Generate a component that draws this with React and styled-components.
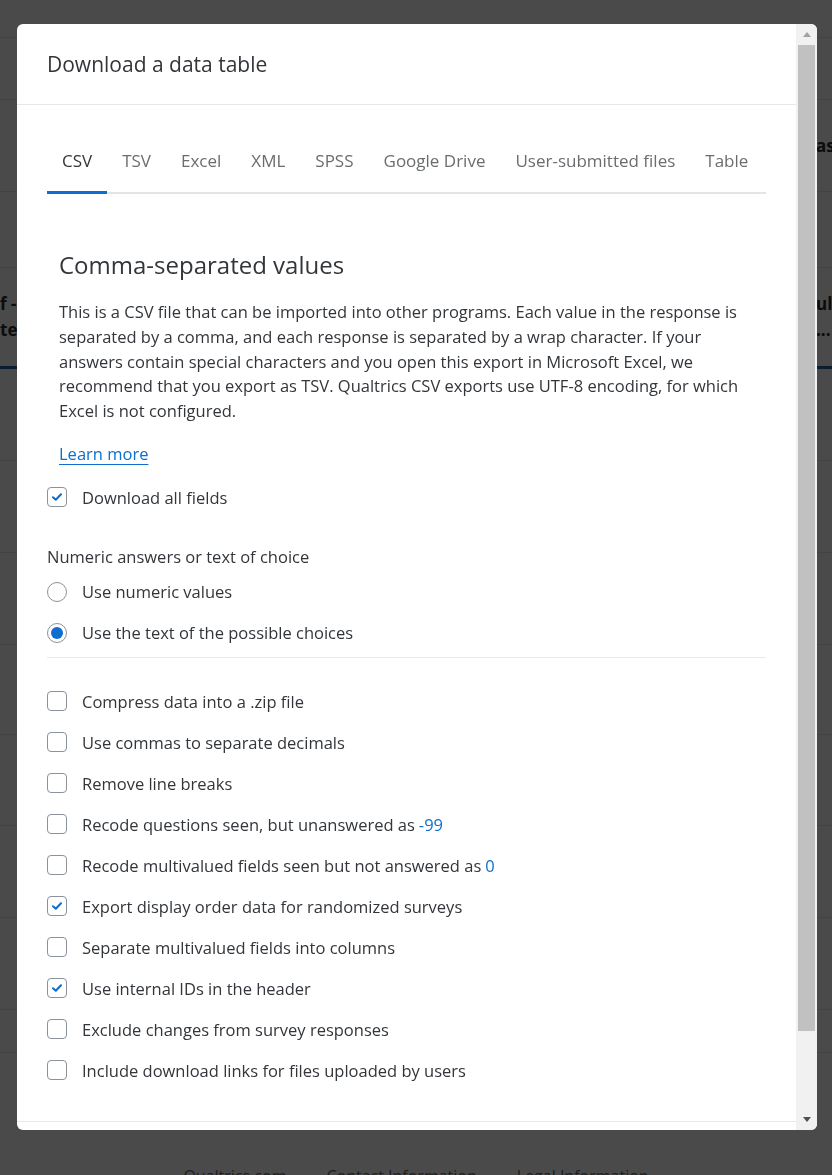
import React from 'react'
import styled, {createGlobalStyle} from 'styled-components'

const GlobalStyle = createGlobalStyle`
  * { box-sizing: border-box; }
  html, body { margin: 0; padding: 0; }
  body {
    font-family: 'Open Sans', 'Noto Sans', Arial, sans-serif;
    color: #32363a;
    background: #fff;
    overflow: hidden;
  }
`

const BLUE = '#0b6ed0'

/* page behind the dialog */
const BgPage = styled.div`
  height: 100vh;
  display: flex;
  flex-direction: column;
  background: #fff;
`
const BgRow = styled.div`
  height: ${({$h}) => $h}px;
  flex-shrink: 0;
  display: flex;
  justify-content: space-between;
  align-items: center;
  border-bottom: ${({$accent}) => ($accent ? '3px solid #2160a6' : '1px solid #e8e8e8')};
  color: #2a2a2a;
  font-size: 17px;
  font-weight: 700;
`
const BgCell = styled.div`
  display: flex;
  flex-direction: column;
  line-height: 26px;
  padding-left: ${({$right}) => ($right ? '0' : '0')};
  width: ${({$right}) => ($right ? '16px' : 'auto')};
  overflow: hidden;
  white-space: nowrap;
`
const BgFooter = styled.div`
  flex: 1;
  display: flex;
  justify-content: center;
  gap: 40px;
  padding-top: 112px;
  color: #6b6b6b;
  font-size: 16px;
`

/* dialog */
const Overlay = styled.div`
  position: fixed;
  inset: 0;
  background: rgba(0, 0, 0, 0.71);
  display: flex;
  padding: 24px 15px 45px 17px;
`
const Modal = styled.div`
  flex: 1;
  display: flex;
  background: #fff;
  border-radius: 6px;
  overflow: hidden;
`
const ModalContent = styled.div`
  flex: 1;
  min-width: 0;
  overflow: hidden;
`
const ScrollBar = styled.div`
  width: 21px;
  flex-shrink: 0;
  display: flex;
  flex-direction: column;
  background: #f1f1f1;
`
const ScrollArrow = styled.div`
  height: 21px;
  flex-shrink: 0;
  display: flex;
  align-items: center;
  justify-content: center;
  &::before {
    content: '';
    width: 0;
    height: 0;
    border-left: 4.5px solid transparent;
    border-right: 4.5px solid transparent;
    ${({$down}) =>
      $down ? 'border-top: 5px solid #505050;' : 'border-bottom: 5px solid #a3a3a3;'}
  }
`
const ScrollTrack = styled.div`
  flex: 1;
  padding: 0 2px;
`
const ScrollThumb = styled.div`
  height: 92.7%;
  background: #c1c1c1;
`

const Header = styled.div`
  height: 81px;
  padding: 0 30px;
  display: flex;
  align-items: center;
  border-bottom: 1px solid #e8e8e8;
`
const Title = styled.h2`
  margin: 0;
  font-size: 21px;
  font-weight: 400;
  color: #32363a;
`
const Body = styled.div`
  padding: 0 30px 30px;
`
const TabList = styled.div`
  margin-top: 24px;
  display: flex;
  border-bottom: 2px solid #e4e4e4;
`
const Tab = styled.div`
  padding: 20px 15px 18px;
  margin-bottom: -2px;
  font-size: 17px;
  line-height: 24px;
  white-space: nowrap;
  color: ${({$active}) => ($active ? '#32363a' : '#6a6d70')};
  border-bottom: 3px solid ${({$active}) => ($active ? BLUE : 'transparent')};
`
const Intro = styled.div`
  margin-top: 55px;
  padding: 0 12px;
`
const SectionTitle = styled.h3`
  margin: 0;
  font-size: 24px;
  line-height: 32px;
  font-weight: 400;
  color: #32363a;
`
const Paragraph = styled.p`
  margin: 19px 0 0;
  font-size: 16.5px;
  line-height: 24.75px;
`
const LinkLine = styled.div`
  margin-top: 18px;
  font-size: 16.5px;
  line-height: 24.75px;
`
const LearnMore = styled.a`
  color: ${BLUE};
  text-decoration: underline;
  text-underline-offset: 4px;
  text-decoration-thickness: 1px;
`
const OptionRow = styled.label`
  height: 41px;
  display: flex;
  align-items: center;
  gap: 15px;
  font-size: 16.5px;
  margin-top: ${({$mt}) => $mt || 0}px;
`
const Box = styled.span`
  width: 20px;
  height: 20px;
  flex-shrink: 0;
  display: flex;
  align-items: center;
  justify-content: center;
  border: 1px solid #8b9299;
  border-radius: ${({$round}) => ($round ? '50%' : '4px')};
  background: #fff;
`
const Dot = styled.span`
  width: 12px;
  height: 12px;
  border-radius: 50%;
  background: ${BLUE};
`
const Value = styled.span`
  color: ${BLUE};
  margin-left: 4px;
`
const GroupLabel = styled.div`
  margin-top: 27px;
  font-size: 16.5px;
  line-height: 24.75px;
`
const Divider = styled.hr`
  margin: 3.5px 0 0;
  border: 0;
  border-top: 1px solid #e8e8e8;
`
const OptionList = styled.div`
  margin-top: 23px;
`
const Footer = styled.div`
  height: 96px;
  padding: 0 30px;
  display: flex;
  align-items: center;
  justify-content: flex-end;
  gap: 12px;
  border-top: 1px solid #e8e8e8;
`
const Button = styled.button`
  font: inherit;
  font-size: 16px;
  padding: 8px 18px;
  border-radius: 4px;
  border: 1px solid ${BLUE};
  background: ${({$primary}) => ($primary ? BLUE : '#fff')};
  color: ${({$primary}) => ($primary ? '#fff' : BLUE)};
`

const Check = () => (
  <svg width="10" height="8" viewBox="0 0 10 8">
    <path d="M1 4.2 L3.8 6.8 L9 1.2" fill="none" stroke={BLUE} strokeWidth="2" strokeLinecap="round" strokeLinejoin="round" />
  </svg>
)

const tabs = ['CSV', 'TSV', 'Excel', 'XML', 'SPSS', 'Google Drive', 'User-submitted files', 'Table']

const options = [
  {label: 'Compress data into a .zip file'},
  {label: 'Use commas to separate decimals'},
  {label: 'Remove line breaks'},
  {label: 'Recode questions seen, but unanswered as', value: '-99'},
  {label: 'Recode multivalued fields seen but not answered as', value: '0'},
  {label: 'Export display order data for randomized surveys', checked: true},
  {label: 'Separate multivalued fields into columns'},
  {label: 'Use internal IDs in the header', checked: true},
  {label: 'Exclude changes from survey responses'},
  {label: 'Include download links for files uploaded by users'},
]

function Checkbox({label, value, checked, mt}) {
  return (
    <OptionRow $mt={mt}>
      <Box>{checked && <Check />}</Box>
      <span>
        {label}
        {value && <Value>{value}</Value>}
      </span>
    </OptionRow>
  )
}

function Radio({label, checked, mt}) {
  return (
    <OptionRow $mt={mt}>
      <Box $round>{checked && <Dot />}</Box>
      <span>{label}</span>
    </OptionRow>
  )
}

function Background() {
  return (
    <BgPage>
      <BgRow $h={38} />
      <BgRow $h={62} />
      <BgRow $h={92}>
        <span />
        <BgCell $right>
          <span>as</span>
        </BgCell>
      </BgRow>
      <BgRow $h={76} />
      <BgRow $h={101} $accent>
        <BgCell>
          <span>f -</span>
          <span>tes</span>
        </BgCell>
        <BgCell $right>
          <span>ulc</span>
          <span>...</span>
        </BgCell>
      </BgRow>
      <BgRow $h={92} />
      <BgRow $h={92} />
      <BgRow $h={92} />
      <BgRow $h={90} />
      <BgRow $h={91} />
      <BgRow $h={92} />
      <BgRow $h={92} />
      <BgRow $h={43} />
      <BgFooter>
        <span>Qualtrics.com</span>
        <span>Contact Information</span>
        <span>Legal Information</span>
      </BgFooter>
    </BgPage>
  )
}

export default function App() {
  return (
    <>
      <GlobalStyle />
      <Background />
      <Overlay>
        <Modal>
          <ModalContent>
            <Header>
              <Title>Download a data table</Title>
            </Header>
            <Body>
              <TabList>
                {tabs.map((t, i) => (
                  <Tab key={t} $active={i === 0}>
                    {t}
                  </Tab>
                ))}
              </TabList>
              <Intro>
                <SectionTitle>Comma-separated values</SectionTitle>
                <Paragraph>
                  This is a CSV file that can be imported into other programs. Each value in the response is
                  separated by a comma, and each response is separated by a wrap character. If your answers
                  contain special characters and you open this export in Microsoft Excel, we recommend that you
                  export as TSV. Qualtrics CSV exports use UTF-8 encoding, for which Excel is not configured.
                </Paragraph>
                <LinkLine>
                  <LearnMore href="#">Learn more</LearnMore>
                </LinkLine>
              </Intro>
              <Checkbox label="Download all fields" checked mt={10} />
              <GroupLabel>Numeric answers or text of choice</GroupLabel>
              <Radio label="Use numeric values" mt={2} />
              <Radio label="Use the text of the possible choices" checked />
              <Divider />
              <OptionList>
                {options.map(o => (
                  <Checkbox key={o.label} {...o} />
                ))}
              </OptionList>
            </Body>
            <Footer>
              <Button>Close</Button>
              <Button $primary>Download</Button>
            </Footer>
          </ModalContent>
          <ScrollBar>
            <ScrollArrow />
            <ScrollTrack>
              <ScrollThumb />
            </ScrollTrack>
            <ScrollArrow $down />
          </ScrollBar>
        </Modal>
      </Overlay>
    </>
  )
}
